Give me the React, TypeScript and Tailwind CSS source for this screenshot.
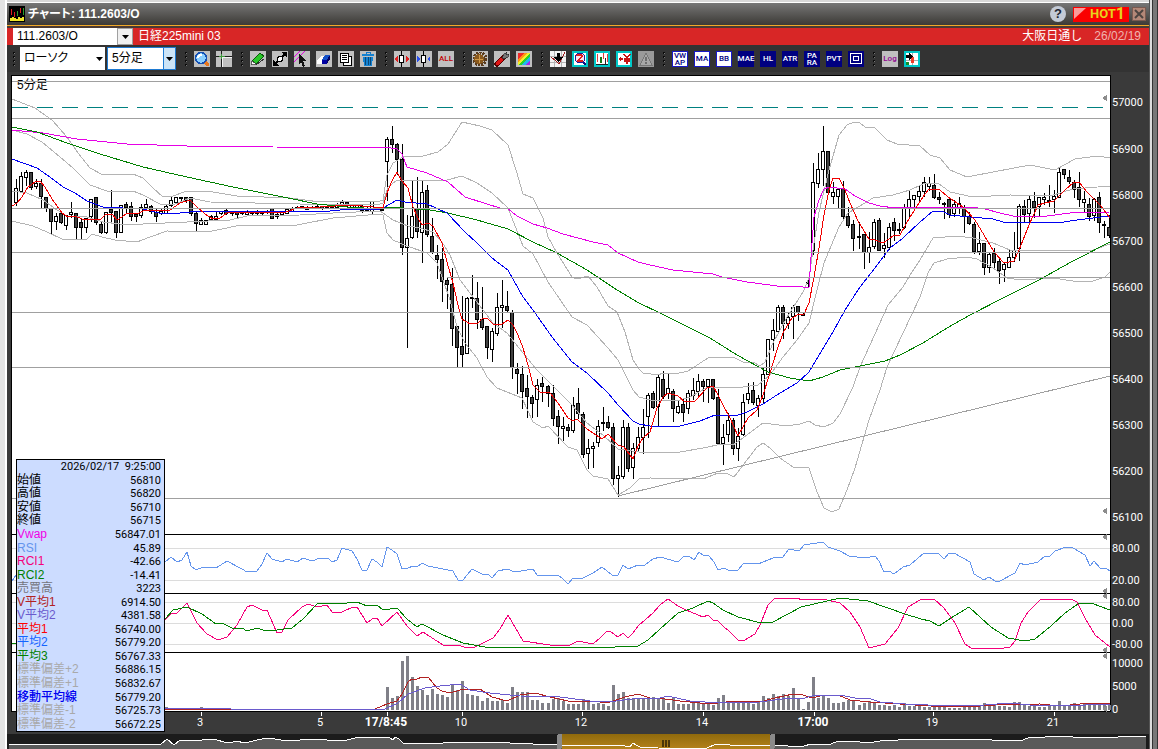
import type { ReactNode } from "react"

// [high, body top, body bottom, low, filled]
type Candle = [number, number, number, number, number]

const candles: Candle[] = [
  [179, 188, 202, 205, 0], [172, 176, 191, 191, 0], [170, 172, 177, 185, 0], [172, 172, 187, 189, 1], [179, 183, 186, 188, 0],
  [179, 183, 196, 207, 1], [197, 197, 208, 211, 1], [208, 208, 221, 233, 1], [213, 216, 221, 229, 0], [211, 213, 222, 223, 1],
  [215, 215, 225, 229, 0], [202, 212, 214, 217, 0], [213, 213, 227, 238, 1], [218, 222, 227, 239, 1], [218, 218, 227, 232, 0],
  [199, 199, 216, 221, 0], [197, 197, 222, 224, 1], [222, 224, 232, 233, 1], [212, 212, 232, 233, 0], [190, 209, 212, 222, 1],
  [211, 211, 232, 237, 1], [205, 205, 232, 232, 0], [202, 204, 207, 212, 1], [202, 206, 216, 220, 1], [213, 214, 216, 221, 1],
  [204, 207, 215, 217, 0], [199, 204, 207, 209, 0], [205, 206, 211, 213, 1], [209, 212, 216, 221, 1], [208, 211, 213, 214, 0],
  [204, 206, 213, 213, 0], [197, 200, 205, 206, 0], [197, 197, 202, 203, 0], [197, 197, 198, 201, 0], [197, 197, 200, 202, 1],
  [197, 197, 213, 215, 1], [212, 213, 223, 230, 1], [218, 220, 224, 224, 0], [220, 220, 224, 224, 0], [215, 216, 219, 219, 0],
  [212, 216, 219, 220, 0], [211, 211, 213, 214, 0], [208, 210, 213, 214, 1], [211, 211, 213, 215, 1], [212, 212, 214, 218, 1],
  [211, 211, 213, 214, 0], [211, 212, 214, 215, 0], [211, 212, 213, 214, 1], [210, 211, 213, 214, 0], [211, 211, 213, 214, 1],
  [210, 211, 212, 213, 0], [208, 208, 218, 218, 1], [213, 214, 216, 218, 0], [211, 212, 214, 214, 0], [209, 209, 213, 213, 0],
  [207, 208, 211, 211, 0], [206, 207, 208, 208, 0], [206, 206, 208, 208, 1], [206, 207, 209, 209, 0], [206, 207, 208, 208, 1],
  [205, 206, 208, 208, 0], [206, 206, 208, 209, 1], [206, 207, 208, 208, 0], [205, 206, 207, 208, 0], [203, 204, 207, 207, 0],
  [200, 202, 206, 206, 0], [201, 202, 205, 206, 1], [204, 205, 207, 208, 0], [205, 205, 207, 207, 0], [205, 206, 210, 212, 1],
  [207, 208, 210, 211, 0], [201, 201, 211, 213, 0], [207, 207, 209, 209, 0], [208, 209, 210, 210, 1],
  [137, 139, 161, 200, 0], [126, 139, 144, 152, 1], [143, 144, 159, 174, 1], [144, 159, 247, 254, 1], [215, 238, 247, 347, 0],
  [181, 216, 237, 238, 0], [177, 208, 231, 237, 1], [181, 192, 232, 262, 0], [185, 190, 234, 236, 1], [218, 236, 252, 253, 1],
  [245, 255, 259, 278, 1], [248, 259, 281, 301, 1], [278, 280, 284, 308, 1], [268, 284, 328, 345, 1], [326, 326, 347, 367, 1],
  [296, 346, 354, 367, 1], [297, 298, 353, 353, 0], [275, 297, 298, 307, 1], [282, 298, 319, 328, 1], [287, 319, 327, 329, 1],
  [326, 326, 347, 358, 1], [328, 331, 349, 361, 0], [293, 307, 333, 335, 0], [280, 305, 307, 327, 0], [291, 306, 310, 312, 1],
  [310, 312, 367, 378, 1], [363, 369, 373, 393, 1], [366, 374, 391, 408, 1], [375, 388, 396, 417, 1], [395, 397, 403, 417, 1],
  [379, 385, 399, 416, 0], [377, 383, 386, 401, 1], [385, 386, 393, 406, 1], [385, 393, 418, 425, 1], [410, 416, 426, 443, 1],
  [417, 426, 428, 440, 0], [424, 427, 430, 436, 1], [397, 405, 430, 432, 0], [388, 403, 413, 418, 1], [412, 414, 454, 457, 1],
  [439, 448, 453, 468, 0], [442, 446, 448, 467, 0], [420, 426, 442, 446, 0], [407, 422, 423, 430, 1], [416, 422, 427, 428, 1],
  [423, 427, 478, 484, 1], [466, 475, 478, 496, 0], [420, 427, 476, 478, 0], [423, 427, 468, 471, 1], [443, 448, 467, 478, 0],
  [427, 437, 448, 450, 0], [409, 427, 437, 453, 0], [393, 395, 416, 437, 0], [391, 393, 407, 408, 1], [374, 377, 406, 425, 0],
  [371, 379, 396, 398, 1], [374, 388, 393, 398, 0], [389, 391, 408, 421, 1], [400, 406, 412, 413, 0], [398, 404, 412, 421, 1],
  [390, 393, 408, 413, 0], [378, 390, 395, 399, 0], [374, 381, 391, 395, 0], [379, 381, 386, 401, 1], [379, 379, 386, 402, 0],
  [379, 379, 398, 399, 1], [389, 397, 443, 443, 1], [424, 437, 443, 464, 0], [413, 420, 434, 441, 0], [418, 420, 448, 454, 1],
  [428, 436, 448, 460, 0], [394, 402, 434, 435, 0], [383, 393, 399, 403, 0], [382, 390, 402, 404, 1], [395, 398, 405, 416, 0],
  [368, 374, 398, 402, 0], [339, 339, 374, 374, 0], [319, 330, 339, 350, 0], [305, 307, 331, 331, 0], [305, 307, 323, 338, 1],
  [313, 317, 323, 328, 0], [305, 307, 316, 338, 0], [306, 306, 312, 320, 1], [313, 314, 315, 315, 1], [277, 282, 283, 287, 1],
  [163, 182, 250, 254, 0], [153, 169, 183, 187, 0], [126, 151, 169, 185, 0], [151, 151, 192, 193, 1], [182, 192, 196, 203, 0],
  [188, 189, 196, 208, 0], [181, 188, 216, 218, 1], [207, 216, 225, 227, 1], [220, 224, 238, 250, 1], [222, 236, 237, 248, 1],
  [234, 234, 252, 268, 1], [232, 247, 252, 262, 0], [219, 222, 246, 248, 0], [218, 220, 250, 250, 1], [233, 245, 248, 257, 0],
  [223, 227, 247, 249, 0], [218, 222, 230, 240, 1], [223, 229, 230, 233, 1], [204, 208, 227, 228, 0], [191, 199, 208, 216, 0],
  [195, 195, 199, 208, 0], [186, 191, 196, 202, 0], [177, 182, 191, 196, 0], [177, 183, 186, 190, 0], [174, 185, 197, 198, 1],
  [192, 197, 199, 203, 1], [202, 203, 204, 218, 1], [197, 199, 214, 217, 1], [200, 204, 213, 216, 0], [197, 203, 207, 213, 0],
  [205, 207, 216, 232, 1], [212, 216, 223, 224, 1], [222, 224, 251, 253, 1], [232, 243, 251, 254, 0], [243, 243, 267, 274, 1],
  [252, 254, 267, 272, 0], [248, 253, 262, 267, 1], [259, 261, 270, 283, 1], [262, 264, 269, 281, 0], [250, 257, 267, 267, 0],
  [232, 250, 257, 261, 0], [204, 206, 248, 260, 0], [200, 206, 214, 221, 1], [196, 199, 213, 221, 0], [192, 201, 207, 217, 1],
  [197, 197, 206, 215, 0], [193, 197, 199, 204, 0], [185, 200, 201, 206, 1], [190, 196, 199, 212, 0], [167, 172, 197, 197, 0],
  [169, 169, 174, 178, 1], [170, 177, 181, 183, 1], [180, 182, 189, 197, 1], [172, 187, 199, 206, 1], [191, 199, 202, 211, 0],
  [198, 204, 216, 220, 1], [198, 199, 215, 220, 0], [192, 197, 222, 232, 1], [221, 224, 225, 237, 1], [215, 227, 235, 237, 1],
]

const candleX = (n: number) => Math.round(387 + (n - 74) * 5.016)

const bands = [
  "12,99 35,108 52,120 67,137 78,153 90,168 103,175 133,174 143,178 153,188 163,197 173,196 187,191 213,192 237,196 290,198 320,202 347,201 380,201 383,200 387,175 393,163 403,157 423,156 438,152 448,144 462,122 480,126 492,130 508,145 517,173 523,194 533,198 543,218 548,237 557,253 572,277 577,279 588,276 597,287 608,306 617,312 625,332 633,360 639,369 643,373 658,375 663,373 675,374 688,371 708,358 733,357 743,362 753,362 760,366 765,362 773,343 787,317 803,292 809,278 814,243 819,212 829,170 839,135 847,125 854,122 860,123 865,127 875,128 887,140 897,144 920,146 930,155 940,158 950,170 967,177 993,172 1030,165 1055,170 1075,159 1097,156 1110,158",
  "12,130 27,134 42,142 60,157 73,168 90,185 107,191 133,191 143,195 160,204 173,205 190,198 210,202 300,204 380,204 383,203 388,187 397,180 447,180 462,176 477,183 492,193 508,208 523,246 533,254 548,282 572,317 587,325 608,348 618,360 633,390 639,397 650,400 680,400 690,397 708,387 743,387 758,385 770,375 783,357 797,340 809,323 817,290 824,263 839,227 848,213 860,206 873,198 893,195 910,190 923,184 938,183 950,192 973,197 1010,195 1050,196 1073,189 1110,186",
  "12,191 27,193 43,200 57,210 67,216 87,217 103,222 120,224 143,224 187,222 230,220 247,216 300,215 333,213 380,211 383,213 393,220 408,226 420,228 433,232 442,242 450,255 460,280 470,293 483,310 493,323 507,333 523,353 537,370 557,390 572,405 587,423 603,435 618,449 639,452 680,452 703,448 722,444 733,445 747,435 763,423 787,426 800,424 809,421 815,425 824,427 833,423 840,414 853,387 860,367 875,334 888,305 903,287 910,275 920,260 933,238 957,236 973,238 993,243 1010,250 1093,250 1110,244",
  "12,221 33,226 47,232 62,239 77,240 87,239 92,234 102,237 115,240 137,242 150,237 167,231 207,232 227,228 240,225 297,225 333,218 380,214 383,215 387,233 393,240 407,246 427,253 437,263 443,280 450,300 457,327 465,343 477,358 487,377 497,388 522,398 533,422 543,428 548,426 568,447 577,450 587,470 593,476 608,479 618,495 630,488 639,479 650,478 703,479 718,473 728,474 734,477 747,460 757,447 763,443 770,448 780,458 793,467 809,468 817,492 824,508 832,512 839,509 847,490 855,468 869,420 880,390 887,367 903,333 920,297 928,273 934,263 947,259 967,257 977,259 993,268 1007,278 1020,280 1053,278 1073,281 1093,281 1105,277 1110,272",
]

const averages = [
  {
    name: "vwap",
    color: "#e600e6",
    points:
      "277,147 380,147 391,148 397,149 402,154 407,167 427,173 448,182 465,197 487,204 500,208 507,208 517,216 533,224 547,228 563,234 578,238 593,242 608,245 618,253 638,262 650,265 673,270 713,274 722,277 747,282 777,286 803,287 809,287 811,257 814,217 819,200 824,189 829,187 845,189 855,196 869,203 880,206 895,208 912,207 970,207 985,209 1000,213 1013,216 1047,216 1070,213 1110,212",
  },
  { name: "vwap-prev", color: "#e600e6", points: "12,130 43,133 77,139 127,144 187,146 273,146" },
  {
    name: "ma3",
    color: "#008000",
    points:
      "12,127 37,132 67,143 100,154 143,167 187,177 233,187 283,197 317,204 347,207 380,209 390,207 430,210 448,213 477,220 508,229 533,242 557,253 587,270 617,290 639,303 660,313 710,338 737,355 768,372 790,378 809,381 823,377 840,370 860,366 885,361 900,355 923,343 947,328 970,315 1003,298 1037,281 1073,261 1110,242",
  },
  {
    name: "ma2",
    color: "#0000f0",
    points:
      "12,159 37,168 50,177 63,187 75,193 87,201 103,207 143,209 163,214 180,213 200,211 220,212 247,211 300,212 330,211 350,209 380,209 383,208 397,200 405,202 427,204 447,213 465,232 477,243 492,258 508,270 523,297 533,310 552,337 572,362 587,373 608,393 618,405 633,421 639,424 650,426 680,426 700,421 715,415 735,416 747,412 763,404 780,393 797,383 809,372 824,347 833,332 845,310 860,287 875,268 890,248 903,238 920,222 933,211 942,211 950,215 970,217 993,219 1003,222 1017,223 1027,222 1057,223 1077,220 1093,218 1110,216",
  },
  {
    name: "ma1",
    color: "#f00000",
    points:
      "12,206 17,203 22,197 28,187 35,182 40,181 45,187 52,199 62,213 68,217 75,216 82,219 93,219 100,220 105,215 112,214 117,220 122,217 127,213 137,214 145,210 153,210 170,210 180,203 190,200 197,207 205,214 213,219 220,218 227,213 250,212 283,213 300,207 320,207 350,205 373,207 383,208 387,193 392,181 397,172 402,181 408,188 413,207 418,218 422,225 428,223 433,226 442,243 447,262 453,283 458,305 462,319 470,324 478,323 483,318 487,318 493,324 502,324 508,320 513,325 518,335 523,348 528,365 533,385 540,392 550,393 558,403 568,418 573,421 577,419 587,429 602,439 608,434 618,445 624,447 633,459 638,446 643,438 650,432 657,408 663,397 668,393 678,396 685,402 695,401 707,388 713,386 718,395 723,405 730,418 738,436 748,418 757,410 763,395 770,373 777,350 783,333 792,318 799,314 804,314 809,303 814,277 819,248 824,215 829,190 833,178 839,178 845,190 850,203 858,221 869,239 875,240 883,243 893,236 900,235 910,217 923,197 929,189 940,190 948,197 963,207 975,220 984,235 994,252 1004,263 1014,261 1019,250 1029,225 1038,205 1045,203 1054,201 1065,190 1073,183 1079,182 1087,192 1100,205 1110,218",
  },
]

const oscillators = [
  {
    name: "rsi",
    color: "#6495ed",
    points:
      "12,581 16,575 165,562 171,557 177,562 182,560 187,552 191,566 196,570 203,567 216,568 227,561 242,569 247,572 257,571 262,564 267,553 272,559 282,562 287,559 297,562 303,558 312,561 320,558 328,558 332,562 337,560 342,548 352,551 357,559 362,570 367,570 372,559 377,562 382,567 387,547 392,550 397,554 402,569 408,568 413,566 417,567 422,563 428,566 443,569 453,571 458,580 463,580 472,569 482,574 488,574 492,578 498,571 507,569 515,572 533,569 537,575 558,575 563,579 568,584 573,578 583,578 593,573 602,567 612,575 618,575 623,565 628,569 638,565 645,565 653,559 660,557 678,562 683,557 689,556 694,560 699,552 703,555 709,556 714,562 718,570 724,568 730,571 738,570 744,563 758,564 773,558 783,557 789,549 799,551 804,545 823,542 828,547 840,551 849,556 865,558 875,556 879,561 884,572 889,571 894,574 903,567 910,565 924,553 939,554 944,559 949,553 954,553 970,562 974,574 984,580 989,577 995,581 1000,581 1015,573 1020,563 1025,565 1038,562 1045,556 1050,556 1055,551 1066,547 1073,548 1085,555 1090,566 1094,561 1100,568 1106,568 1110,571",
  },
  {
    name: "rci1",
    color: "#f5007a",
    points:
      "165,620 172,613 177,613 187,603 197,623 207,634 218,640 227,637 237,625 247,607 252,605 262,610 267,610 277,633 282,632 288,620 302,607 308,604 317,607 327,605 332,612 342,612 353,607 357,607 367,623 372,619 377,618 382,626 397,612 407,626 417,636 423,632 443,645 458,645 467,648 475,647 493,638 500,629 508,615 523,641 550,645 570,645 578,641 593,644 600,638 607,631 611,632 618,637 623,633 628,638 633,633 638,626 653,613 660,605 668,599 678,606 686,610 703,617 708,615 713,620 718,621 724,627 729,631 738,640 743,641 755,634 760,625 768,605 775,598 795,598 804,600 823,599 840,603 850,612 860,627 869,648 885,644 898,628 908,607 920,600 934,599 944,608 955,623 965,644 971,648 998,649 1010,647 1015,641 1021,623 1028,612 1040,600 1051,599 1071,599 1077,602 1085,618 1095,635 1110,647",
  },
  {
    name: "rci2",
    color: "#008000",
    points:
      "12,644 16,643 165,619 173,610 187,607 202,614 216,624 222,623 232,628 242,628 247,631 257,628 263,630 277,630 292,628 303,619 318,603 337,604 357,602 367,606 377,605 383,610 397,608 407,619 417,627 422,624 443,635 463,643 485,647 570,647 593,648 638,646 648,640 660,629 678,613 693,608 708,601 713,603 723,610 738,617 761,623 773,622 801,607 840,598 868,601 905,614 921,619 930,621 939,626 951,618 969,607 991,627 1008,638 1025,641 1035,639 1051,626 1065,613 1078,604 1091,603 1110,610",
  },
]

const volumes = [
  23, 12, 14, 49, 54, 33, 24, 20, 15, 21, 16, 15, 13, 26, 20, 29, 16, 15, 14, 9, 12, 9, 9, 10, 7, 23, 18, 18, 18, 10, 10, 7,
  7, 11, 12, 9, 6, 6, 6, 11, 9, 6, 7, 6, 4, 25, 16, 18, 12, 11, 12, 12, 12, 13, 12, 11, 7, 12, 6, 6, 6, 9, 8, 6, 6, 5, 12,
  15, 8, 7, 8, 9, 7, 6, 8, 14, 12, 16, 14, 16, 14, 22, 11, 1, 8, 33, 12, 14, 12, 7, 7, 8, 10, 9, 5, 7, 9, 7, 5, 5, 4, 5, 3,
  7, 4, 4, 5, 3, 3, 4, 3, 4, 2, 2, 2, 3, 3, 5, 5, 7, 4, 5, 4, 4, 3, 8, 8, 5, 4, 4, 3, 3, 4, 4, 9, 4, 5, 7, 4, 7, 5, 6, 5, 5, 5,
]

const earlyVolumes = [3, 1, 2, 2, 1, 1, 2, 3, 2, 1, 2, 1, 1, 1]

const volumeAverages = [
  {
    name: "v1",
    color: "#b22222",
    points:
      "165,709 232,709 375,709 387,704 397,701 402,694 408,682 412,679 417,679 422,677 428,677 437,688 442,691 450,693 460,690 480,689 492,697 507,701 520,695 535,693 550,697 568,701 600,702 610,702 625,697 638,694 650,698 665,699 680,701 700,703 718,703 735,701 760,702 775,698 793,694 800,694 812,698 820,696 838,695 850,700 870,702 900,704 930,706 965,707 995,705 1040,704 1060,706 1080,704 1110,703",
  },
  {
    name: "v2",
    color: "#6a5acd",
    points:
      "165,708 230,708 231,709 385,709 398,703 408,694 425,688 440,686 460,684 470,690 490,693 520,696 560,697 575,699 590,701 608,702 640,698 660,698 668,696 690,701 720,703 760,702 790,698 805,698 815,695 840,695 860,699 868,698 880,702 905,704 950,706 985,705 1010,703 1030,705 1060,706 1110,704",
  },
]

const overview =
  "9,744 161,744 167,739 174,745 180,740 190,740 200,741 204,739 217,740 224,742 230,743 236,741 245,743 257,740 267,738 275,739 287,741 300,740 314,739 327,740 347,740 355,738 363,737 380,737 390,738 393,740 395,737 399,739 403,743 417,744 443,743 455,742 470,743 495,742 510,743 533,744 558,745 620,745 630,747 633,743 636,745 640,747 658,748 700,749 707,748 716,744 730,745 745,746 771,745 788,746 796,747 804,746 811,744 831,744 838,741 860,742 868,743 880,741 898,740 925,739 950,740 975,739 1008,741 1023,740 1030,737 1045,737 1065,736 1073,737 1085,738 1100,737 1118,737 1130,736 1146,737"

const priceLines = [81, 118, 208, 252, 312, 367, 498]
const subLines = [548, 580, 602, 623, 644]
const dividers = [534, 593, 652]
const markers = [98, 511, 537, 591, 596, 650, 656, 709]

const axisLabels: [string, number][] = [
  ["57000", 101], ["56900", 148], ["56800", 194], ["56700", 240], ["56600", 286], ["56500", 332],
  ["56400", 378], ["56300", 424], ["56200", 470], ["56100", 516], ["80.00", 547], ["20.00", 579],
  ["80.00", 601], ["0.00", 622], ["-80.00", 643], ["10000", 662], ["5000", 685], ["0", 708],
]

const timeLabels: [string, number, boolean][] = [
  ["3", 200, false], ["5", 320, false], ["17/8:45", 386, true], ["10", 461, false], ["12", 581, false],
  ["14", 702, false], ["17:00", 813, true], ["19", 932, false], ["21", 1053, false],
]

const readings = [
  { label: "始値", value: "56810", tone: "text-black" },
  { label: "高値", value: "56820", tone: "text-black" },
  { label: "安値", value: "56710", tone: "text-black" },
  { label: "終値", value: "56715", tone: "text-black" },
  { label: "Vwap", value: "56847.01", tone: "text-[#f000e6]" },
  { label: "RSI", value: "45.89", tone: "text-[#6495ed]" },
  { label: "RCI1", value: "-42.66", tone: "text-[#f5007a]" },
  { label: "RCI2", value: "-14.41", tone: "text-[#008000]" },
  { label: "売買高", value: "3223", tone: "text-[#74747c]" },
  { label: "V平均1", value: "6914.50", tone: "text-[#b22222]" },
  { label: "V平均2", value: "4381.58", tone: "text-[#6a5acd]" },
  { label: "平均1", value: "56740.00", tone: "text-[#ff0000]" },
  { label: "平均2", value: "56779.20", tone: "text-[#1464ff]" },
  { label: "平均3", value: "56767.33", tone: "text-[#008000]" },
  { label: "標準偏差+2", value: "56886.15", tone: "text-[#a9a9a9]" },
  { label: "標準偏差+1", value: "56832.67", tone: "text-[#a9a9a9]" },
  { label: "移動平均線", value: "56779.20", tone: "text-[#0000f0]" },
  { label: "標準偏差-1", value: "56725.73", tone: "text-[#a9a9a9]" },
  { label: "標準偏差-2", value: "56672.25", tone: "text-[#a9a9a9]" },
]

type Tool = { name: string; face: string; icon?: ReactNode; text?: string[] }

const GRAY = "bg-[#c0c0c0] text-[#c00000]"
const CYAN = "bg-white border-2 border-[#00c8c8]"
const NAVY = "bg-[#000080] text-white"
const BLUE = "bg-white border border-[#1818c8] text-[#000080]"

const candleGlyph = (
  <>
    <path d="M7 0h1v16H7z" fill="#000" />
    <path d="M5.500 4.500h4v7h-4z" fill="#fff" stroke="#000" />
  </>
)

const toolGroups: Tool[][] = [
  [
    {
      name: "拡大",
      face: GRAY,
      icon: (
        <>
          <path d="M10 10l4 4" stroke="#e87820" strokeWidth="3" strokeLinecap="round" />
          <circle cx="7" cy="7" r="5.500" fill="#8cd0ff" stroke="#1450b4" strokeWidth="1.500" />
          <path d="M4 7a3 3 0 0 1 4-3" stroke="#fff" strokeWidth="2" fill="none" />
        </>
      ),
    },
    {
      name: "十字線",
      face: GRAY,
      icon: (
        <>
          <path d="M0 5h16v1H0zM5 0h1v16H5z" fill="#1c1c1c" />
          <path d="M6 6h10v1H6zM6 7h1v9H6z" fill="#f4f4f4" />
          <path d="M3 5h6v1H3zM5 3h1v5H5z" fill="#3c9a3c" />
        </>
      ),
    },
  ],
  [
    {
      name: "ペン",
      face: GRAY,
      icon: (
        <>
          <path d="M2 10L10 2l4 3-8 8z" fill="#28c828" stroke="#0a5a0a" />
          <path d="M2 10l-1 4 5-1z" fill="#fff" stroke="#444" strokeWidth=".8" />
          <path d="M6 14l8-6" stroke="#333" />
        </>
      ),
    },
    {
      name: "線分",
      face: GRAY,
      icon: (
        <>
          <path d="M2 14L14 2" stroke="#000" strokeWidth="2" />
          <path d="M9 1h6v6zM1 9v6h6z" fill="#000" />
          <circle cx="8" cy="8" r="2.500" fill="#fff" stroke="#000" />
        </>
      ),
    },
    {
      name: "選択",
      face: GRAY,
      icon: (
        <>
          <path d="M0 6l6-6M0 11L11 0" stroke="#e600e6" />
          <path d="M5 3l8 7H9l2 5-2 1-2-5-2 2z" fill="#111" />
        </>
      ),
    },
    {
      name: "消しゴム",
      face: GRAY,
      icon: (
        <>
          <path d="M1 9l4-4h5l-4 4v4H1z" fill="#fff" />
          <path d="M6 9l3-5h5L11 9z" fill="#1450c8" />
          <path d="M6 9h5v4H6z" fill="#0000a0" />
          <path d="M11 9l3-5v4l-3 5z" fill="#000060" />
        </>
      ),
    },
    {
      name: "一覧",
      face: GRAY,
      icon: (
        <>
          <path d="M5.500 5.500h8v9h-8z" fill="#fff" stroke="#000" />
          <path d="M2.500 2.500h8v9h-8z" fill="#fff" stroke="#000" />
          <path d="M4 4h5v1H4zM4 6h5v1H4zM4 8h5v1H4z" fill="#000" />
        </>
      ),
    },
    {
      name: "削除",
      face: GRAY,
      icon: (
        <>
          <path d="M6 1.500h4v2H6z" fill="none" stroke="#1478c8" />
          <path d="M2 3h12v2H2zM3 6h10l-1 9H4z" fill="#1482d2" />
          <path d="M5 6h1v8H5zM8 6h1v8H8zM10 6h1v8h-1z" fill="#084878" />
        </>
      ),
    },
  ],
  [
    {
      name: "間隔を広げる",
      face: GRAY,
      icon: (
        <>
          {candleGlyph}
          <path d="M4 5v6L0 8zM12 5v6l4-3z" fill="#e02020" />
        </>
      ),
    },
    {
      name: "間隔を狭める",
      face: GRAY,
      icon: (
        <>
          {candleGlyph}
          <path d="M1 5v6l3-3zM14 5v6l-3-3z" fill="#2850f0" />
        </>
      ),
    },
    { name: "全表示", face: GRAY, text: ["ALL"] },
  ],
  [
    {
      name: "設定",
      face: GRAY,
      icon: (
        <>
          <circle cx="8" cy="8" r="6" fill="none" stroke="#5a3c1e" strokeWidth="3" strokeDasharray="2 1" />
          <circle cx="7" cy="8" r="5" fill="#8a5a1e" />
          <path d="M3 8h8M7 4v8" stroke="#d29a46" />
        </>
      ),
    },
    {
      name: "ツール",
      face: GRAY,
      icon: (
        <>
          <path d="M3 13l6-6" stroke="#500" strokeWidth="5" strokeLinecap="round" />
          <path d="M3 13l5-5" stroke="#e01414" strokeWidth="3" strokeLinecap="round" />
          <path d="M8 7l2-4 3-2-1 3 3-1-1 3-4 2z" fill="#777" stroke="#222" strokeWidth=".7" />
        </>
      ),
    },
    {
      name: "配色",
      face: GRAY,
      icon: (
        <>
          <path d="M2 2h12v12H2z" fill="#f0f028" />
          <path d="M2 2h6L2 8z" fill="#f02828" />
          <path d="M2 8l6-6h3l-9 9z" fill="#ff9614" />
          <path d="M2 14L14 2v3l-9 9z" fill="#28d228" />
          <path d="M5 14l9-9v4l-5 5z" fill="#1eb4f0" />
          <path d="M9 14l5-5v5z" fill="#a028e6" />
        </>
      ),
    },
  ],
  [
    {
      name: "チャート保存",
      face: GRAY,
      icon: (
        <>
          <path d="M0 0h16v16H0z" fill="#f4f4f4" />
          <path d="M4 0h1v16H4zM11 0h1v16h-1zM0 5h16v1H0zM0 11h16v1H0z" fill="#b4b4b4" />
          <path d="M1 6l5 4 3 3 6-12" fill="none" stroke="#a01e1e" />
          <path d="M7 2h3v4h3l-4.500 5L4 6h3z" fill="#000" />
        </>
      ),
    },
    {
      name: "比較検索",
      face: CYAN,
      icon: (
        <>
          <path d="M10 10l4 4" stroke="#101080" strokeWidth="2" />
          <circle cx="8" cy="7" r="5" fill="#ffe6f0" stroke="#1e1ea0" />
          <path d="M5 5c1-2 5-2 5 0S6 8 6 10h5" fill="none" stroke="#e01e1e" strokeWidth="2" />
        </>
      ),
    },
    {
      name: "出来高",
      face: CYAN,
      icon: (
        <>
          <path d="M3 3h1v8H3zM13 3h1v8h-1zM9 2h1v6H9z" fill="#e03c3c" />
          <path d="M6 6h2v6H6z" fill="#147814" />
          <path d="M2 13h12v1H2zM11 7h1v6h-1z" fill="#222" />
        </>
      ),
    },
    {
      name: "損益",
      face: CYAN,
      icon: (
        <>
          <path d="M2 8l3-3v2h2v2H5v2z" fill="#c81414" />
          <path d="M8 3l3 4 3-4M11 7v6M8 8h6M8 10h6" fill="none" stroke="#c81414" strokeWidth="1.500" />
        </>
      ),
    },
    {
      name: "警告",
      face: "bg-[#9a9a9a]",
      icon: (
        <>
          <path d="M8 2l6 12H2z" fill="#a8a8a8" stroke="#777" />
          <path d="M7 6h2v4H7zM7 11h2v2H7z" fill="#6e6e6e" />
        </>
      ),
    },
  ],
  [
    { name: "VWAP", face: BLUE, text: ["VW", "AP"] },
    { name: "MA", face: BLUE, text: ["MA"] },
    { name: "BB", face: BLUE, text: ["BB"] },
    { name: "MAE", face: NAVY, text: ["MAE"] },
    { name: "HL", face: NAVY, text: ["HL"] },
    { name: "ATR", face: NAVY, text: ["ATR"] },
    { name: "PARA", face: NAVY, text: ["PA", "RA"] },
    { name: "PVT", face: NAVY, text: ["PVT"] },
    {
      name: "回帰",
      face: NAVY,
      icon: <path d="M2.500 2.500h11v10h-11zM5.500 5.500h5v4h-5z" fill="none" stroke="#fff" />,
    },
  ],
  [
    { name: "Log", face: "bg-[#c0c0c0] text-[#900090]", text: ["Log"] },
    {
      name: "配置",
      face: CYAN,
      icon: (
        <>
          <path d="M8 2h1v12H8zM2 9h12v1H2z" fill="#aaa" />
          <path d="M7 6h3v6H7z" fill="#f03c28" />
          <path d="M2 4h3V2l4 3-4 4V7H2z" fill="#000" />
          <path d="M2 11h3v3H2z" fill="#148c28" />
        </>
      ),
    },
  ],
]

function Grip() {
  return (
    <svg width="3" height="16" className="shrink-0" aria-hidden="true" shapeRendering="crispEdges">
      <path d="M0 1h2v2H0zM0 5h2v2H0zM0 9h2v2H0zM0 13h2v2H0z" fill="#0a0a0a" />
      <path d="M1 2h1v1H1zM1 6h1v1H1zM1 10h1v1H1zM1 14h1v1H1z" fill="#777" />
    </svg>
  )
}

function ToolButton({ tool }: { tool: Tool }) {
  return (
    <button type="button" aria-label={tool.name} className={`flex size-4 shrink-0 flex-col items-center justify-center ${tool.face}`}>
      {tool.icon && (
        <svg viewBox="0 0 16 16" className="size-4 shrink-0" shapeRendering="crispEdges">
          {tool.icon}
        </svg>
      )}
      {tool.text?.map((line) => (
        <span key={line} className="font-[Roboto] text-[8px] leading-[7px] font-medium">
          {line}
        </span>
      ))}
    </button>
  )
}

function Picker({ id, label, value, width, arrow }: { id: string; label: string; value: string; width: string; arrow: string }) {
  return (
    <div className={`relative flex shrink-0 ${width}`}>
      <label htmlFor={id} className="sr-only">
        {label}
      </label>
      <select id={id} defaultValue={value} className="w-full appearance-none bg-white py-0 pl-1 text-[12px] leading-[17px] text-black outline-none">
        <option>{value}</option>
      </select>
      <span className={`pointer-events-none absolute inset-y-0 right-0 flex items-center justify-center ${arrow}`}>
        <svg width="7" height="4" viewBox="0 0 7 4" aria-hidden="true">
          <path d="M0 0h7L3.500 4z" fill="#000" />
        </svg>
      </span>
    </div>
  )
}

function PriceChart() {
  return (
    <svg viewBox="7 72 1142 661" className="block h-auto w-full" shapeRendering="crispEdges" role="img" aria-label="日経225mini 5分足">
      <rect x="11" y="75" width="1100" height="637" fill="#000" />
      <rect x="12" y="76" width="1098" height="635" fill="#fff" />

      <text x="17" y="89" fontSize="12" fill="#000">5分足</text>
      <path d="M12 107.500H1110" stroke="#008080" strokeDasharray="16 9" />

      {candles.map(([high, top, bottom, low, filled], n) => (
        <g key={n}>
          <rect x={candleX(n)} y={high} width="1" height={low - high + 1} fill="#000" />
          <rect x={candleX(n) - 2} y={top} width="4" height={bottom - top + 1} fill="#000" />
          {bottom - top > 1 && (
            <rect x={candleX(n) - 1} y={top + 1} width="2" height={bottom - top - 1} fill={filled ? "#404040" : "#fff"} />
          )}
        </g>
      ))}

      {bands.map((points, i) => (
        <polyline key={i} points={points} fill="none" stroke="#b4b4b4" />
      ))}
      {averages.map((line) => (
        <polyline key={line.name} points={line.points} fill="none" stroke={line.color} />
      ))}
      {priceLines.map((y) => (
        <rect key={y} x="12" y={y} width="1098" height="1" fill="#a0a0a0" />
      ))}
      <rect x="447" y="277" width="663" height="1" fill="#a0a0a0" />
      <polyline points="618,496 1110,376" fill="none" stroke="#a0a0a0" />

      {dividers.map((y) => (
        <rect key={y} x="12" y={y} width="1098" height="1" fill="#000" />
      ))}
      {subLines.map((y) => (
        <rect key={y} x="12" y={y} width="1098" height="1" fill="#dcdcdc" />
      ))}
      {oscillators.map((line) => (
        <polyline key={line.name} points={line.points} fill="none" stroke={line.color} />
      ))}

      {earlyVolumes.map((h, n) => (
        <rect key={n} x={165 + n * 5} y={710 - h} width="3" height={h} fill="#808088" />
      ))}
      {volumes.map((h, n) => (
        <rect key={n} x={candleX(n + 74) - 1} y={710 - h} width="3" height={h} fill="#808088" />
      ))}
      {volumeAverages.map((line) => (
        <polyline key={line.name} points={line.points} fill="none" stroke={line.color} />
      ))}

      {markers.map((y) => (
        <path key={y} d={`M1107 ${y - 3}v6l-5-3z`} fill="#8c8c8c" />
      ))}
      <g className="font-[Roboto]" fontSize="11" fill="#fff">
        {axisLabels.map(([label, y]) => (
          <text key={y} x="1112" y={y + 5}>{label}</text>
        ))}
        {timeLabels.map(([label, x, bold]) => (
          <g key={label}>
            <rect x={x + 1} y="712" width="1" height="4" />
            <text x={x} y="726" fontSize={bold ? 12 : 11} fontWeight={bold ? 700 : 400} textAnchor="middle">{label}</text>
          </g>
        ))}
      </g>
    </svg>
  )
}

function Overview() {
  return (
    <svg viewBox="7 733 1142 16" className="block h-auto w-full" shapeRendering="crispEdges" role="img" aria-label="表示範囲">
      <defs>
        <linearGradient id="range" x1="0" y1="0" x2="0" y2="1">
          <stop offset="0" stopColor="#8f6a0c" />
          <stop offset="1" stopColor="#b5821c" />
        </linearGradient>
      </defs>
      <rect x="7" y="734" width="1142" height="15" fill="#1c1c1c" />
      <polygon points={`9,749 ${overview} 1146,749`} fill="#5a5a5a" />
      <rect x="562" y="734" width="208" height="15" fill="url(#range)" />
      <polyline points={overview} fill="none" stroke="#fff" />
      <path d="M662 740h2v7h-2zM665 740h2v7h-2zM668 740h2v7h-2z" fill="#4a3508" />
      <rect x="557" y="734" width="5" height="15" rx="2" fill="#8a8a8a" />
      <rect x="770" y="734" width="5" height="15" rx="2" fill="#8a8a8a" />
    </svg>
  )
}

function ReadingPanel() {
  return (
    <table aria-label="四本値と指標" className="absolute bottom-px left-[9px] h-[273px] w-[149px] border border-black bg-[#ccdcff] text-[12px]">
      <tbody>
        <tr>
          <td colSpan={2} className="py-0 pr-[3px] text-right font-[Roboto] text-[11px] leading-[13px] text-black">
            2026/02/17&nbsp; 9:25:00
          </td>
        </tr>
        {readings.map((row) => (
          <tr key={row.label}>
            <th scope="row" className={`p-0 text-left leading-[13px] whitespace-nowrap ${row.label === "移動平均線" ? "font-medium" : "font-normal"} ${row.tone}`}>
              {row.label}
            </th>
            <td className="py-0 pr-[3px] text-right font-[Roboto] text-[11px] leading-[13px] text-black">{row.value}</td>
          </tr>
        ))}
      </tbody>
    </table>
  )
}

export default function App() {
  return (
    <div className="flex min-h-screen bg-[#e3e3e3] font-['Liberation_Sans','Noto_Sans_CJK_JP',sans-serif]">
      <div className="w-[5px] shrink-0" />
      <div className="w-[2px] shrink-0 bg-white" />
      <main className="min-w-0 flex-1 bg-[#3a3a3a]">
        <div className="h-[3px] border-b border-white bg-[#d8d8d8]" />
        <header className="flex h-[22px] items-center gap-[3px] bg-linear-to-b from-[#777] to-[#3c3a36] pr-[3px] pl-[2px] text-white">
          <svg width="16" height="16" viewBox="0 0 16 16" aria-hidden="true" shapeRendering="crispEdges">
            <path d="M0 0h16v16H0z" fill="#000" />
            <path d="M2 3h1v6H2zM5 6h1v5H5zM11 2h1v5h-1z" fill="#e02020" />
            <path d="M8 5h1v5H8zM14 2h1v7h-1z" fill="#28a028" />
            <path d="M1 15v-3h2v-1h2v1h2v1h2v-2h2v1h2v-1h2v4z" fill="#f0e628" />
          </svg>
          <h1 className="text-[12px] leading-4 font-bold [font-feature-settings:'palt']">チャート: 111.2603/O</h1>
          <div className="ml-auto flex items-center gap-[3px]">
            <button type="button" aria-label="ヘルプ" className="mr-1 flex size-4 items-center justify-center rounded-full bg-[#c3cad6] text-[13px] leading-4 font-bold text-[#1e2632]">
              ?
            </button>
            <button type="button" className="relative flex h-[15px] w-14 items-center justify-end bg-[#fa0000] pr-1 font-[Roboto] font-bold text-[#e6d21e]">
              <svg width="12" height="11" className="absolute top-px left-px" aria-hidden="true">
                <path d="M0 0h12L0 11z" fill="#fa9a9a" />
              </svg>
              <span className="text-[13px] leading-4">HOT</span>
              <span className="text-[16px] leading-4">1</span>
            </button>
            <button type="button" aria-label="閉じる" className="flex size-[14px] items-center justify-center border border-[#7a5a50] bg-[#b48878]">
              <svg width="10" height="10" viewBox="0 0 10 10">
                <path d="M1 1l8 8M9 1L1 9" stroke="#4c4440" strokeWidth="2" />
              </svg>
            </button>
          </div>
        </header>
        <div className="h-[3px] border-t border-[#f0a828] bg-[#4a3a34]" />

        <div className="flex h-[17px] items-stretch bg-[#d82626] pl-[6px] text-[12px] leading-[17px] text-white">
          <Picker id="symbol" label="銘柄" value="111.2603/O" width="w-[120px]" arrow="w-4 border border-[#a0a0a0] bg-[#f0f0f0]" />
          <span className="ml-[5px]">日経225mini 03</span>
          <span className="ml-auto">大阪日通し</span>
          <span className="mr-2 ml-3 text-[#f0b4b0]">26/02/19</span>
        </div>

        <div className="flex h-[27px] items-center bg-[#333] pl-[6px]">
          <Grip />
          <div className="ml-1 flex h-[23px] items-stretch gap-[2px]">
            <Picker id="style" label="種類" value="ローソク" width="w-[85px] [font-feature-settings:'palt']" arrow="w-3" />
            <Picker id="interval" label="足種" value="5分足" width="w-[69px] border border-[#1e7ad2]" arrow="w-3 border-l border-[#1e7ad2] bg-[#cce4f7]" />
          </div>
          {toolGroups.map((group, i) => (
            <div key={i} className="ml-[9px] flex items-center gap-[6px]">
              <Grip />
              {group.map((tool) => (
                <ToolButton key={tool.name} tool={tool} />
              ))}
            </div>
          ))}
        </div>

        <div className="relative">
          <PriceChart />
          <ReadingPanel />
        </div>
        <Overview />
      </main>
      <div className="flex shrink-0">
        <div className="w-px bg-[#555]" />
        <div className="w-[2px] bg-[#dcdcdc]" />
        <div className="w-px bg-[#333]" />
        <div className="w-1 bg-[#777]" />
        <div className="w-px bg-[#333]" />
      </div>
    </div>
  )
}
